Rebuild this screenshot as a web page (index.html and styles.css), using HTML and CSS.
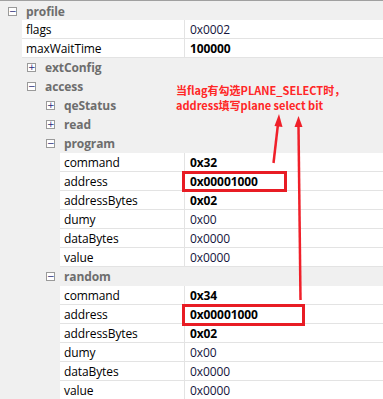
FILE: index.html
```html
<!DOCTYPE html>
<html lang="en">
<head>
  <meta charset="UTF-8">
  <meta name="viewport" content="width=device-width, initial-scale=1.0">
  <title>Property Grid</title>
  <link rel="stylesheet" href="styles.css">
</head>
<body>

  <div class="grid">
    <div class="group lvl-0"><span class="toggle">&minus;</span><span class="group-name">profile</span></div>
    <div class="prop lvl-0"><span class="name">flags</span><span class="value">0x0002</span></div>
    <div class="prop lvl-0"><span class="name">maxWaitTime</span><span class="value bold">100000</span></div>
    <div class="group lvl-1"><span class="toggle">+</span><span class="group-name">extConfig</span></div>
    <div class="group lvl-1"><span class="toggle">&minus;</span><span class="group-name">access</span></div>
    <div class="group lvl-2"><span class="toggle">+</span><span class="group-name">qeStatus</span></div>
    <div class="group lvl-2"><span class="toggle">+</span><span class="group-name">read</span></div>
    <div class="group lvl-2"><span class="toggle">&minus;</span><span class="group-name">program</span></div>
    <div class="prop lvl-2"><span class="name">command</span><span class="value bold">0x32</span></div>
    <div class="prop lvl-2"><span class="name">address</span><span class="value bold">0x00001000</span></div>
    <div class="prop lvl-2"><span class="name">addressBytes</span><span class="value bold">0x02</span></div>
    <div class="prop lvl-2"><span class="name">dumy</span><span class="value">0x00</span></div>
    <div class="prop lvl-2"><span class="name">dataBytes</span><span class="value">0x0000</span></div>
    <div class="prop lvl-2"><span class="name">value</span><span class="value">0x0000</span></div>
    <div class="group lvl-2"><span class="toggle">&minus;</span><span class="group-name">random</span></div>
    <div class="prop lvl-2"><span class="name">command</span><span class="value bold">0x34</span></div>
    <div class="prop lvl-2"><span class="name">address</span><span class="value bold">0x00001000</span></div>
    <div class="prop lvl-2"><span class="name">addressBytes</span><span class="value bold">0x02</span></div>
    <div class="prop lvl-2"><span class="name">dumy</span><span class="value">0x00</span></div>
    <div class="prop lvl-2"><span class="name">dataBytes</span><span class="value">0x0000</span></div>
    <div class="prop lvl-2"><span class="name">value</span><span class="value">0x0000</span></div>
  </div>

  <!-- red annotation drawn on top of the grid -->
  <div class="note">当flag有勾选PLANE_SELECT时，<br>address填写plane select bit</div>
  <svg class="marks" width="383" height="399" viewBox="0 0 383 399">
    <rect x="183.5" y="172.5" width="102" height="18" fill="none" stroke="#e81c24" stroke-width="3"/>
    <rect x="183.5" y="305.5" width="120" height="19" fill="none" stroke="#e81c24" stroke-width="3"/>
    <line x1="273.5" y1="163" x2="278" y2="124" stroke="#f0202a" stroke-width="2.5"/>
    <polygon points="279,114 274.5,126 282.5,127" fill="#f0202a"/>
    <line x1="300.5" y1="300" x2="298.5" y2="126" stroke="#f0202a" stroke-width="2.5"/>
    <polygon points="298.5,116 294.5,127 302.5,127" fill="#f0202a"/>
  </svg>

</body>
</html>
```

FILE: styles.css
```css
body {
  margin: 0;
  width: 383px;
  height: 399px;
  overflow: hidden;
  position: relative;
  background-color: #f0f0f0;
  font-family: "Open Sans", "Noto Sans", sans-serif;
  font-size: 12px;
  letter-spacing: -0.1px;
  color: #000;
}
.grid {
  border-top: 1px solid #a0a0a0;
  padding-top: 1px;
}
.group {
  display: flex;
  align-items: center;
  height: 18px;
  border-bottom: 1px solid #f0f0f0;
}
.grid .group:first-child {
  border-bottom: none;
}
.group.lvl-0 { padding-left: 8px; }
.group.lvl-1 { padding-left: 27px; }
.group.lvl-2 { padding-left: 46px; }
.toggle {
  box-sizing: border-box;
  width: 9px;
  height: 9px;
  border: 1px solid #9a9a9a;
  background-color: #fff;
  color: #2b2b7a;
  font-family: "DejaVu Sans", sans-serif;
  font-size: 9px;
  letter-spacing: 0;
  line-height: 6px;
  text-align: center;
  margin-right: 9px;
}
.group-name {
  font-weight: bold;
  color: #6d6d6d;
}
.prop {
  display: flex;
  height: 18px;
  line-height: 19px;
  background-color: #fff;
  border-bottom: 1px solid #e3e3e3;
}
.prop.lvl-0 { margin-left: 22px; }
.prop.lvl-1 { margin-left: 41px; }
.prop.lvl-2 { margin-left: 60px; }
.name {
  flex: none;
  box-sizing: border-box;
  padding-left: 4px;
  border-right: 1px solid #e3e3e3;
}
.prop.lvl-0 .name { width: 163px; }
.prop.lvl-1 .name { width: 144px; }
.prop.lvl-2 .name { width: 125px; }
.value {
  padding-left: 5px;
  color: #14143c;
}
.value.bold {
  font-weight: bold;
  color: #000;
}
.note {
  position: absolute;
  left: 176px;
  top: 83px;
  font-family: "Noto Sans CJK SC", sans-serif;
  font-size: 11px;
  font-weight: bold;
  letter-spacing: 0;
  line-height: 15px;
  color: #ff2626;
}
.marks {
  position: absolute;
  left: 0;
  top: 0;
}
```
